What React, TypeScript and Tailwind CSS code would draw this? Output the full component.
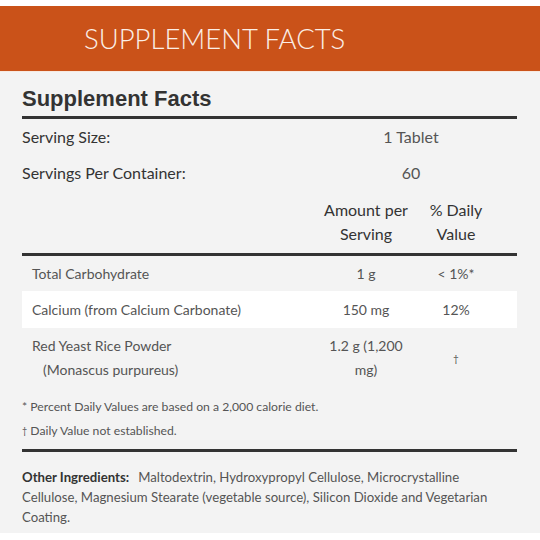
import React from "react";

const font = { fontFamily: "Lato, 'Open Sans', sans-serif" };

export default function App() {
  return (
    <div className="w-[540px] h-[540px] bg-white overflow-hidden" style={font}>
      <div className="h-[6px]" />
      <div className="h-[65px] bg-[#ca5219] flex items-center pl-[84px]">
        <span className="text-[27.5px] font-light text-[#fbeee6] leading-none">SUPPLEMENT FACTS</span>
      </div>
      <div className="h-[462px] bg-[#f3f3f3] border-t border-[#f7e9e0] px-[22px] pt-[14px] text-[#444]">
        <div className="w-[495px]">
          <h2 className="text-[22px] font-bold text-[#333] leading-[26px]" style={{ fontFamily: "'Liberation Sans', Arial, sans-serif" }}>
            Supplement Facts
          </h2>
          <div className="h-[3px] bg-[#333] mt-[4px]" />
          <div className="flex items-center h-[36px] text-[16px] text-[#333]">
            <div className="flex-1">Serving Size:</div>
            <div className="w-[180px] text-center text-[#555] mr-[16px]">1 Tablet</div>
          </div>
          <div className="flex items-center h-[36px] text-[16px] text-[#333]">
            <div className="flex-1">Servings Per Container:</div>
            <div className="w-[180px] text-center text-[#555] mr-[16px]">60</div>
          </div>
          <div className="flex text-[16px] text-[#333] leading-[24px] pt-[7px] pb-[7px]">
            <div className="flex-1" />
            <div className="w-[90px] text-center">Amount per<br />Serving</div>
            <div className="w-[90px] text-center">% Daily<br />Value</div>
            <div className="w-[16px]" />
          </div>
          <div className="h-[3px] bg-[#333]" />
          <div className="flex items-center h-[34px] text-[14px] text-[#555]">
            <div className="flex-1 pl-[10px]">Total Carbohydrate</div>
            <div className="w-[90px] text-center">1 g</div>
            <div className="w-[90px] text-center">&lt; 1%*</div>
            <div className="w-[16px]" />
          </div>
          <div className="flex items-center h-[37px] text-[14px] text-[#555] bg-white mt-[1px]">
            <div className="flex-1 pl-[10px]">Calcium (from Calcium Carbonate)</div>
            <div className="w-[90px] text-center">150 mg</div>
            <div className="w-[90px] text-center">12%</div>
            <div className="w-[16px]" />
          </div>
          <div className="flex items-center text-[14px] text-[#555] leading-[24px] pt-[6px] pb-[6px]">
            <div className="flex-1 pl-[10px]">
              Red Yeast Rice Powder
              <br />
              <span className="pl-[11px]">(Monascus purpureus)</span>
            </div>
            <div className="w-[90px] text-center">1.2 g (1,200<br />mg)</div>
            <div className="w-[90px] text-center text-[10px]">†</div>
            <div className="w-[16px]" />
          </div>
          <div className="text-[12.2px] text-[#555] mt-[11px] leading-[16px]">* Percent Daily Values are based on a 2,000 calorie diet.</div>
          <div className="text-[12.2px] text-[#555] mt-[8px] leading-[16px]">
            <span className="text-[9px] align-top">†</span> Daily Value not established.
          </div>
          <div className="h-[3px] bg-[#333] mt-[10px]" />
          <div className="text-[13.2px] text-[#555] leading-[20px] mt-[15px]">
            <span className="font-bold text-[#333]">Other Ingredients:</span>
            <span className="ml-[9px]">Maltodextrin, Hydroxypropyl Cellulose, Microcrystalline</span>
            <br />
            Cellulose, Magnesium Stearate (vegetable source), Silicon Dioxide and Vegetarian
            <br />
            Coating.
          </div>
        </div>
      </div>
    </div>
  );
}
